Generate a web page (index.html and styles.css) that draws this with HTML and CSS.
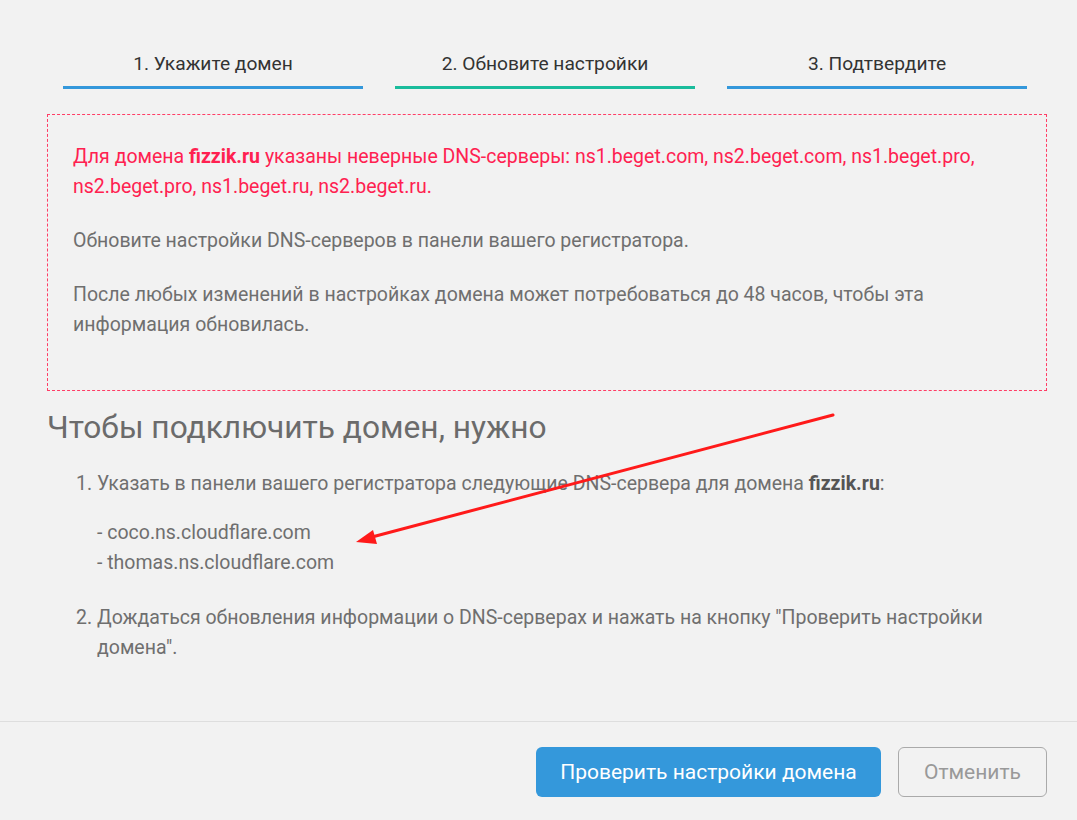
FILE: index.html
```html
<!DOCTYPE html>
<html lang="ru">
<head>
    <meta charset="UTF-8">
    <title>Подключение домена</title>
    <link rel="stylesheet" href="styles.css">
</head>
<body>

    <div class="wizard">
        <!-- Steps -->
        <div class="steps">
            <div class="step done">1. Укажите домен</div>
            <div class="step active">2. Обновите настройки</div>
            <div class="step">3. Подтвердите</div>
        </div>

        <div class="alert">
            <p class="alert-error">Для домена <b>fizzik.ru</b> указаны неверные DNS-серверы: ns1.beget.com, ns2.beget.com, ns1.beget.pro, ns2.beget.pro, ns1.beget.ru, ns2.beget.ru.</p>
            <p>Обновите настройки DNS-серверов в панели вашего регистратора.</p>
            <p>После любых изменений в настройках домена может потребоваться до 48 часов, чтобы эта информация обновилась.</p>
        </div>

        <h2 class="title">Чтобы подключить домен, нужно</h2>

        <ol class="howto">
            <li>
                Указать в панели вашего регистратора следующие DNS-сервера для домена <b>fizzik.ru</b>:
                <ul class="servers">
                    <li>- coco.ns.cloudflare.com</li>
                    <li>- thomas.ns.cloudflare.com</li>
                </ul>
            </li>
            <li>Дождаться обновления информации о DNS-серверах и нажать на кнопку "Проверить настройки домена".</li>
        </ol>
    </div>

    <div class="footer">
        <button class="btn btn-primary">Проверить настройки домена</button>
        <button class="btn btn-cancel">Отменить</button>
    </div>

    <!-- annotation arrow -->
    <svg class="arrow" width="1077" height="820" viewBox="0 0 1077 820">
        <line x1="833" y1="415" x2="372" y2="537" stroke="#ff1a1a" stroke-width="3" stroke-linecap="round"/>
        <polygon points="356,542 373,530 377,544" fill="#ff1a1a"/>
    </svg>

</body>
</html>
```

FILE: styles.css
```css
body {
    margin: 0;
    background-color: #f2f2f2;
    font-family: 'Roboto', 'Noto Sans', sans-serif;
    color: #6f6f6f;
    font-size: 19.5px;
    position: relative;
    min-height: 820px;
}

.wizard {
    width: 1000px;
    margin-left: 47px;
    padding-top: 52px;
}

/* Steps */
.steps {
    display: flex;
    gap: 32px;
    margin-left: 16px;
    width: 964px;
}

.step {
    flex: 1;
    text-align: center;
    color: #333;
    font-size: 19.2px;
    line-height: 24px;
    padding-bottom: 10px;
    border-bottom: 3px solid #3498db;
}

.step.active {
    border-bottom-color: #1abc9c;
}

.alert {
    margin-top: 25px;
    border: 1px dashed #ff3d66;
    padding: 27px 25px 26px;
    line-height: 30px;
}

.alert p {
    margin: 0 0 24px;
}

.alert-error {
    color: #ff2150;
}

.title {
    margin: 17px 0 0;
    font-size: 31.7px;
    font-weight: 400;
    line-height: 40px;
    color: #6b6b6b;
}

.howto {
    margin: 21px 0 0;
    padding-left: 50px;
    line-height: 30px;
}

.howto > li {
    margin-bottom: 25px;
}

.howto b {
    color: #555;
}

.servers {
    list-style: none;
    margin: 19px 0 0;
    padding: 0;
}

.footer {
    position: absolute;
    left: 0;
    right: 0;
    top: 721px;
    border-top: 1px solid #dedede;
    display: flex;
    justify-content: flex-end;
    gap: 17px;
    padding: 25px 30px 0 0;
}

.btn {
    height: 50px;
    font-family: inherit;
    font-size: 21px;
    border-radius: 6px;
    cursor: pointer;
}

.btn-primary {
    width: 345px;
    border: none;
    background-color: #3498db;
    color: #fff;
}

.btn-cancel {
    width: 149px;
    background: transparent;
    border: 1px solid #aaa;
    color: #999;
}

.arrow {
    position: absolute;
    left: 0;
    top: 0;
    pointer-events: none;
}
```
